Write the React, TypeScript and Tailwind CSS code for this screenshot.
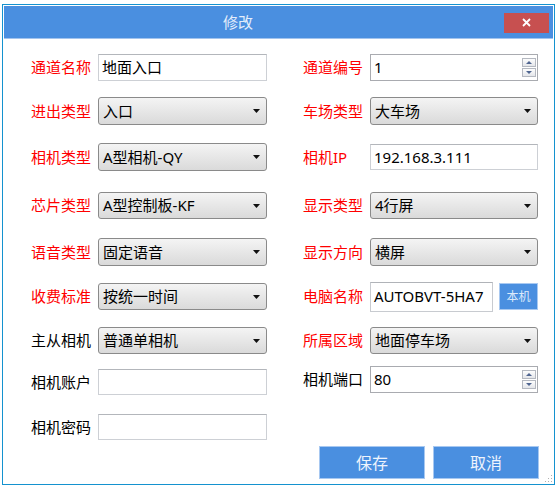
import React from 'react'

const FONT = "font-['Noto_Sans','Noto_Sans_CJK_SC',sans-serif]"

type FieldKind =
  | { type: 'text'; value: string; h?: string }
  | { type: 'select'; value: string }
  | { type: 'spin'; value: string }
  | { type: 'pc'; value: string }

interface Field {
  label: string
  red: boolean
  ctl: FieldKind
}

function Arrow() {
  return (
    <svg width="7" height="4" viewBox="0 0 7 4" className="shrink-0">
      <polygon points="0,0 7,0 3.5,4" fill="#111" />
    </svg>
  )
}

function SpinBtn({ up }: { up?: boolean }) {
  return (
    <div className="w-[14px] h-[9px] border border-[#b4b8c0] bg-linear-to-b from-[#fdfdfd] to-[#e4e6ea] flex items-center justify-center">
      <svg width="6" height="3" viewBox="0 0 6 3">
        <polygon points={up ? '0,3 6,3 3,0' : '0,0 6,0 3,3'} fill="#4f6590" />
      </svg>
    </div>
  )
}

function Control({ ctl, w }: { ctl: FieldKind; w: string }) {
  if (ctl.type === 'select') {
    return (
      <div className={`${w} h-full rounded-[3px] border border-[#8a8a8a] bg-linear-to-b from-[#f4f4f4] to-[#dadada] flex items-center pl-[4px] pr-[6px]`}>
        <span className="flex-1 text-[15px] text-black leading-none whitespace-nowrap">{ctl.value}</span>
        <Arrow />
      </div>
    )
  }
  if (ctl.type === 'spin') {
    return (
      <div className={`${w} h-full border border-[#a9abb0] bg-white flex items-center pl-[3px] pr-px`}>
        <span className="flex-1 text-[15px] text-black leading-none">{ctl.value}</span>
        <div className="flex flex-col gap-px">
          <SpinBtn up />
          <SpinBtn />
        </div>
      </div>
    )
  }
  if (ctl.type === 'pc') {
    return (
      <div className={`${w} h-full flex items-center gap-[6px]`}>
        <div className="w-[123px] h-[30px] border border-[#c8cbd0] border-t-[#b0b3b8] bg-white flex items-center pl-[3px] overflow-hidden">
          <span className="text-[15px] text-black leading-none whitespace-nowrap">{ctl.value}</span>
        </div>
        <div className="w-[39px] h-[27px] bg-[#4a8fe0] border border-[#a9c9f1] flex items-center justify-center">
          <span className="text-[12px] text-[#dce9fb] leading-none">本机</span>
        </div>
      </div>
    )
  }
  return (
    <div className={`${w} ${ctl.h ?? 'h-full'} border border-[#cdd0d5] border-t-[#b3b6bb] bg-white flex items-center pl-[3px]`}>
      <span className="text-[15px] text-black leading-none whitespace-nowrap">{ctl.value}</span>
    </div>
  )
}

function Label({ text, red, side }: { text: string; red: boolean; side: 'l' | 'r' }) {
  return (
    <div
      className={`${side === 'l' ? 'w-[86px] pl-[27px]' : 'w-[95px] pl-[36px]'} shrink-0 text-left text-[15px] leading-none whitespace-nowrap ${red ? 'text-[#ff0000]' : 'text-black'}`}
    >
      {text}
    </div>
  )
}

function Row({ left, right, cls }: { left?: Field; right?: Field; cls: string }) {
  return (
    <div className={`flex ${cls}`}>
      <div className="flex items-center w-[263px] h-full">
        {left && (
          <>
            <Label text={left.label} red={left.red} side="l" />
            <div className="ml-[8px] flex items-center h-full">
              <Control ctl={left.ctl} w="w-[169px]" />
            </div>
          </>
        )}
      </div>
      <div className="flex items-center h-full">
        {right && (
          <>
            <Label text={right.label} red={right.red} side="r" />
            <div className="ml-[8px] flex h-full items-center">
              <Control ctl={right.ctl} w="w-[168px]" />
            </div>
          </>
        )}
      </div>
    </div>
  )
}

export default function App() {
  return (
    <div className={`${FONT} w-[558px] h-[489px] bg-white pt-[4px] pl-[2px]`}>
      <div className="relative w-[553px] h-[481px] border border-[#1492cf] bg-white p-px flex flex-col">
        {/* Title bar */}
        <div className="h-[32px] bg-[#4a8fe0] flex items-center pl-[219px] pr-[4px]">
          <span className="text-[15px] text-[#e3edfb] leading-none">修改</span>
          <div className="ml-auto w-[45px] h-[20px] bg-[#c75050] flex items-center justify-center mt-[1px]">
            <svg width="9" height="9" viewBox="0 0 9 9">
              <path d="M1 1 L8 8 M8 1 L1 8" stroke="#fff" strokeWidth="1.8" />
            </svg>
          </div>
        </div>
        <div className="h-px bg-[#a3c4ee]" />

        {/* Form */}
        <Row
          cls="mt-[15px] h-[27px]"
          left={{ label: '通道名称', red: true, ctl: { type: 'text', value: '地面入口' } }}
          right={{ label: '通道编号', red: true, ctl: { type: 'spin', value: '1' } }}
        />
        <Row
          cls="mt-[16px] h-[28px]"
          left={{ label: '进出类型', red: true, ctl: { type: 'select', value: '入口' } }}
          right={{ label: '车场类型', red: true, ctl: { type: 'select', value: '大车场' } }}
        />
        <Row
          cls="mt-[18px] h-[28px]"
          left={{ label: '相机类型', red: true, ctl: { type: 'select', value: 'A型相机-QY' } }}
          right={{ label: '相机IP', red: true, ctl: { type: 'text', value: '192.168.3.111', h: 'h-[26px]' } }}
        />
        <Row
          cls="mt-[21px] h-[27px]"
          left={{ label: '芯片类型', red: true, ctl: { type: 'select', value: 'A型控制板-KF' } }}
          right={{ label: '显示类型', red: true, ctl: { type: 'select', value: '4行屏' } }}
        />
        <Row
          cls="mt-[19px] h-[28px]"
          left={{ label: '语音类型', red: true, ctl: { type: 'select', value: '固定语音' } }}
          right={{ label: '显示方向', red: true, ctl: { type: 'select', value: '横屏' } }}
        />
        <Row
          cls="mt-[17px] h-[27px]"
          left={{ label: '收费标准', red: true, ctl: { type: 'select', value: '按统一时间' } }}
          right={{ label: '电脑名称', red: true, ctl: { type: 'pc', value: 'AUTOBVT-5HA7' } }}
        />
        <Row
          cls="mt-[17px] h-[27px]"
          left={{ label: '主从相机', red: false, ctl: { type: 'select', value: '普通单相机' } }}
          right={{ label: '所属区域', red: true, ctl: { type: 'select', value: '地面停车场' } }}
        />
        <div className="flex mt-[12px] h-[29px]">
          <div className="flex items-center w-[263px] pt-[3px]">
            <Label text="相机账户" red={false} side="l" />
            <div className="ml-[8px] w-[169px] h-[26px] border border-[#cdd0d5] border-t-[#b3b6bb] bg-white" />
          </div>
          <div className="flex items-center h-[27px]">
            <Label text="相机端口" red={false} side="r" />
            <div className="ml-[8px] h-full flex">
              <Control ctl={{ type: 'spin', value: '80' }} w="w-[168px]" />
            </div>
          </div>
        </div>
        <div className="flex items-center mt-[19px] h-[26px]">
          <Label text="相机密码" red={false} side="l" />
          <div className="ml-[8px] w-[169px] h-[26px] border border-[#cdd0d5] border-t-[#b3b6bb] bg-white" />
        </div>

        {/* Buttons */}
        <div className="flex mt-[6px] pl-[315px] gap-[8px]">
          <div className="w-[106px] h-[33px] bg-[#4a8fe0] border border-[#a7c8f1] flex items-center justify-center">
            <span className="text-[16px] text-[#eef4fd] leading-none">保存</span>
          </div>
          <div className="w-[106px] h-[33px] bg-[#4a8fe0] border border-[#a7c8f1] flex items-center justify-center">
            <span className="text-[16px] text-[#eef4fd] leading-none">取消</span>
          </div>
        </div>

        {/* resize grip */}
        <svg width="8" height="8" viewBox="0 0 8 8" className="absolute right-[1px] bottom-[1px]">
          <rect x="6" y="0" width="1" height="1" fill="#b0b0b0" />
          <rect x="3" y="3" width="1" height="1" fill="#b0b0b0" />
          <rect x="6" y="3" width="1" height="1" fill="#b0b0b0" />
          <rect x="0" y="6" width="1" height="1" fill="#b0b0b0" />
          <rect x="3" y="6" width="1" height="1" fill="#b0b0b0" />
          <rect x="6" y="6" width="1" height="1" fill="#b0b0b0" />
        </svg>
      </div>
    </div>
  )
}
